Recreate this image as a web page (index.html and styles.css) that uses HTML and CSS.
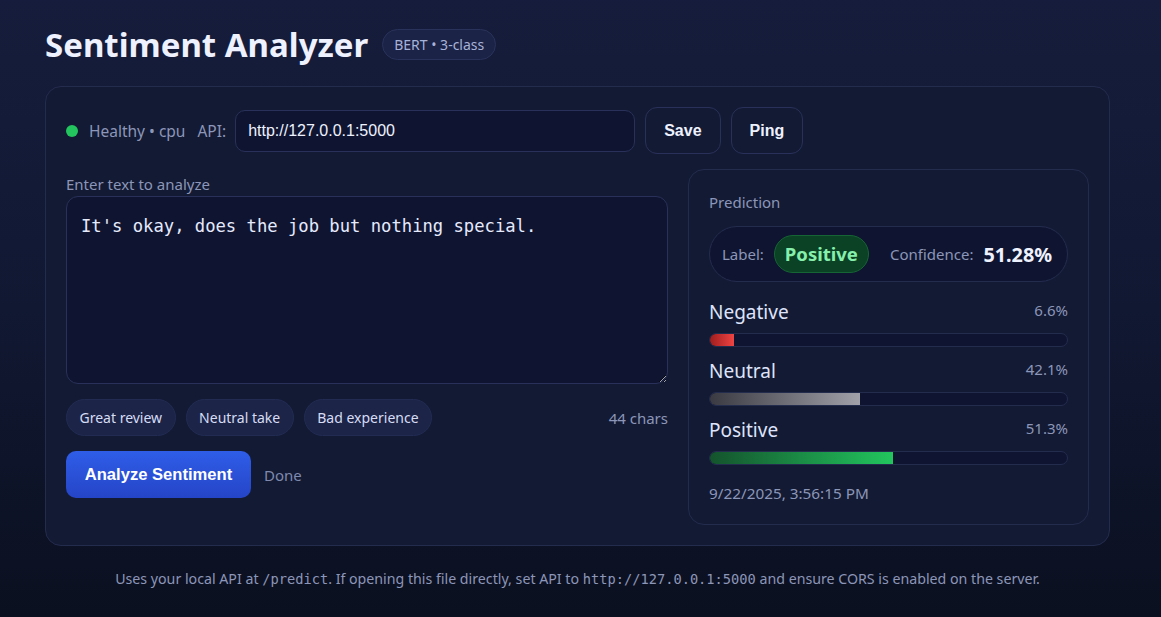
FILE: index.html
```html
<!DOCTYPE html>
<html lang="en">
<head>
<meta charset="utf-8">
<title>Sentiment Analyzer</title>
<link rel="stylesheet" href="styles.css">
</head>
<body>
<div class="wrap">
  <header class="head">
    <h1 class="title">Sentiment Analyzer</h1>
    <span class="badge">BERT • 3-class</span>
  </header>
  <main class="card">
    <div class="toolbar">
      <span class="dot"></span>
      <span class="status">Healthy • cpu</span>
      <span class="api-label">API:</span>
      <input class="api-input" type="text" value="http://127.0.0.1:5000">
      <button class="btn">Save</button>
      <button class="btn">Ping</button>
    </div>
    <div class="cols">
      <section class="left">
        <label class="field-label">Enter text to analyze</label>
        <textarea class="text">It's okay, does the job but nothing special.</textarea>
        <div class="chips-row">
          <div class="chips">
            <button class="chip">Great review</button>
            <button class="chip">Neutral take</button>
            <button class="chip">Bad experience</button>
          </div>
          <span class="count">44 chars</span>
        </div>
        <div class="actions">
          <button class="primary">Analyze Sentiment</button>
          <span class="done">Done</span>
        </div>
      </section>
      <section class="panel">
        <div class="panel-title">Prediction</div>
        <div class="summary">
          <span class="muted">Label:</span>
          <span class="pos-badge">Positive</span>
          <span class="muted conf">Confidence:</span>
          <span class="conf-val">51.28%</span>
        </div>
        <div class="rows">
          <div class="row">
            <div class="row-head"><span class="row-name">Negative</span><span class="row-pct">6.6%</span></div>
            <div class="bar"><div class="fill neg" style="width:6.6%"></div></div>
          </div>
          <div class="row">
            <div class="row-head"><span class="row-name">Neutral</span><span class="row-pct">42.1%</span></div>
            <div class="bar"><div class="fill neu" style="width:42.1%"></div></div>
          </div>
          <div class="row">
            <div class="row-head"><span class="row-name">Positive</span><span class="row-pct">51.3%</span></div>
            <div class="bar"><div class="fill pos" style="width:51.3%"></div></div>
          </div>
        </div>
        <div class="stamp">9/22/2025, 3:56:15 PM</div>
      </section>
    </div>
  </main>
  <footer class="foot">Uses your local API at <code>/predict</code>. If opening this file directly, set API to <code>http://127.0.0.1:5000</code> and ensure CORS is enabled on the server.</footer>
</div>
</body>
</html>
```

FILE: styles.css
```css
* { box-sizing: border-box; }
html, body { height: 100%; }
body {
  margin: 0;
  font-family: "Noto Sans", "Open Sans", sans-serif;
  color: #e6eaff;
  background: linear-gradient(180deg, #161d3c 0%, #111832 50%, #0b1020 100%);
  min-height: 617px;
}
.wrap {
  width: 1065px;
  margin: 0 auto 0 45px;
  padding-top: 22px;
}
.head {
  display: flex;
  align-items: center;
  gap: 14px;
  height: 44px;
}
.title {
  margin: 0;
  font-size: 33px;
  font-weight: 700;
  color: #eef1ff;
}
.badge {
  font-size: 14px;
  color: #a7b2d8;
  background: #1b2346;
  border: 1px solid #29325a;
  border-radius: 999px;
  padding: 5px 11px;
  line-height: 19px;
}
.card {
  margin-top: 20px;
  background: #131a34;
  border: 1px solid #242c4e;
  border-radius: 16px;
  padding: 20px;
  height: 460px;
}
.toolbar {
  display: flex;
  align-items: center;
  height: 47px;
}
.dot {
  width: 12px;
  height: 12px;
  border-radius: 50%;
  background: #22c55e;
  margin-right: 11px;
}
.status, .api-label {
  font-size: 15.5px;
  color: #8c96b8;
}
.api-label { margin-left: 12px; margin-right: 9px; }
.api-input {
  width: 400px;
  height: 42px;
  background: #0f1530;
  border: 1px solid #29315a;
  border-radius: 10px;
  color: #eef1ff;
  font-family: "Liberation Sans", Arial, sans-serif;
  font-size: 16px;
  padding: 0 12px;
  margin-right: 10px;
  outline: none;
}
.btn {
  height: 47px;
  padding: 0 18px;
  background: #131a34;
  border: 1px solid #29315a;
  border-radius: 12px;
  color: #eef1ff;
  font-family: "Liberation Sans", Arial, sans-serif;
  font-weight: 700;
  font-size: 16px;
  margin-right: 10px;
}
.cols {
  display: grid;
  grid-template-columns: 602px 401px;
  gap: 20px;
  margin-top: 15px;
}
.left { padding-top: 6px; }
.field-label {
  display: block;
  font-size: 15px;
  color: #8c96b8;
  line-height: 18px;
  margin-bottom: 3px;
}
.text {
  display: block;
  width: 602px;
  height: 188px;
  background: #0f1530;
  border: 1px solid #29315a;
  border-radius: 12px;
  color: #e6eaff;
  font-family: "DejaVu Sans Mono", monospace;
  font-size: 17.2px;
  line-height: 24px;
  padding: 17px 14px 15px;
  resize: vertical;
  outline: none;
}
.chips-row {
  display: flex;
  align-items: center;
  justify-content: space-between;
  margin-top: 15px;
}
.chips { display: flex; gap: 10px; }
.chip {
  height: 37px;
  padding: 0 12.5px;
  background: #1c2447;
  border: 1px solid #222b52;
  border-radius: 999px;
  color: #d6dcf5;
  font-family: "Noto Sans", sans-serif;
  font-size: 14px;
}
.count { font-size: 15px; color: #8c96b8; }
.actions {
  display: flex;
  align-items: center;
  gap: 13px;
  margin-top: 15px;
}
.primary {
  width: 185px;
  height: 47px;
  border: 0;
  border-radius: 10px;
  background: linear-gradient(180deg, #2f5de8 0%, #2545c7 100%);
  color: #ffffff;
  font-family: "Liberation Sans", Arial, sans-serif;
  font-weight: 700;
  font-size: 16.6px;
}
.done { font-size: 15px; color: #7f89ad; }
.panel {
  background: #131a34;
  border: 1px solid #242c4e;
  border-radius: 16px;
  padding: 22px 20px 20px 20px;
  height: 356px;
}
.panel-title { font-size: 15px; color: #8c96b8; line-height: 20px; }
.summary {
  display: flex;
  align-items: center;
  height: 56px;
  margin-top: 14px;
  border: 1px solid #242c4e;
  border-radius: 28px;
  background: #0f1530;
  padding: 0 12px;
}
.muted { font-size: 15px; color: #8c96b8; }
.pos-badge {
  margin-left: 10px;
  height: 38px;
  line-height: 36px;
  padding: 0 10px;
  border-radius: 19px;
  background: #0b4124;
  border: 1px solid #166534;
  color: #86efac;
  font-weight: 700;
  font-size: 18.5px;
}
.conf { margin-left: 21px; }
.conf-val { margin-left: 10px; font-weight: 700; font-size: 19.8px; color: #eef1ff; }
.rows { margin-top: 18px; display: flex; flex-direction: column; gap: 12px; }
.row-head {
  display: flex;
  justify-content: space-between;
  align-items: flex-start;
  margin-bottom: 8px;
}
.row-name { font-size: 19px; color: #dfe4fb; line-height: 25px; }
.row-pct { font-size: 15px; color: #8c96b8; line-height: 20px; }
.bar {
  height: 14px;
  border-radius: 7px;
  background: #0f1530;
  border: 1px solid #242c4e;
  overflow: hidden;
}
.fill { height: 100%; }
.neg { background: linear-gradient(90deg, #a01d1d, #ef4444); }
.neu { background: linear-gradient(90deg, #3a3a42, #a1a1aa); }
.pos { background: linear-gradient(90deg, #14532d, #22c55e); }
.stamp { margin-top: 18px; font-size: 15.3px; color: #8c96b8; }
.foot {
  text-align: center;
  margin-top: 23px;
  font-size: 14.2px;
  color: #8c96b8;
}
.foot code { font-family: "DejaVu Sans Mono", monospace; font-size: 13.7px; }
```
